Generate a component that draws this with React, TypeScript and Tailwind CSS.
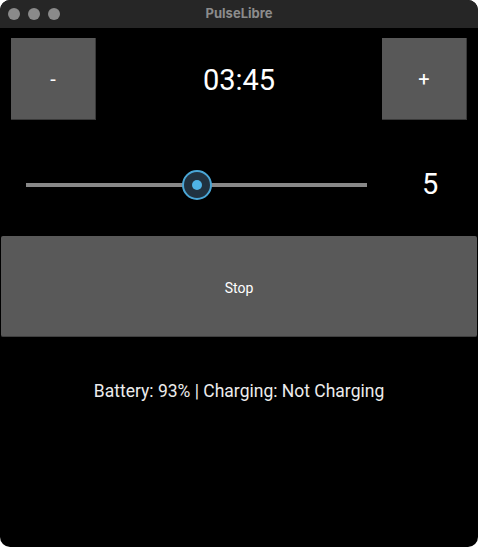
import React from 'react'

const Dot = () => <span className='w-[12px] h-[12px] rounded-full bg-[#8a8a8a]' />

export default function App() {
  return (
    <div className='w-[478px] h-[547px] bg-white' style={{ fontFamily: 'Roboto, sans-serif' }}>
      <div className='w-full h-full rounded-[10px] overflow-hidden bg-black flex flex-col'>
        {/* title bar */}
        <div className='h-[28px] bg-[#262626] relative flex items-center justify-center shrink-0'>
          <div className='absolute left-[8px] top-[8px] flex gap-[8px]'>
            <Dot />
            <Dot />
            <Dot />
          </div>
          <span className='text-[13px] font-bold text-[#8c8c8c]' style={{ fontFamily: 'Inter, sans-serif' }}>PulseLibre</span>
        </div>

        {/* timer row */}
        <div className='flex items-center justify-between px-[11px] pt-[10px]'>
          <button className='w-[85px] h-[82px] bg-[#585858] border-r border-b border-[#3a3a3a] text-white text-[20px]'>-</button>
          <span className='text-white text-[29px] pt-[4px]'>03:45</span>
          <button className='w-[85px] h-[82px] bg-[#585858] border-r border-b border-[#3a3a3a] text-white text-[20px]'>+</button>
        </div>

        {/* slider row */}
        <div className='flex items-center mt-[50px] h-[30px]'>
          <div className='ml-[26px] w-[341px] h-[4px] bg-[#888888] relative'>
            <div className='absolute left-[156px] top-[-13px] w-[30px] h-[30px] rounded-full bg-[#213240] border-[2px] border-[#4aa6d6] flex items-center justify-center'>
              <span className='w-[10px] h-[10px] rounded-full bg-[#4fb3e6]' />
            </div>
          </div>
          <span className='ml-[55px] text-white text-[29px]'>5</span>
        </div>

        {/* stop */}
        <button className='mx-[1px] mt-[36px] h-[101px] bg-[#595959] border-b border-[#3f3f3f] rounded-[2px] text-white text-[14px] pt-[4px]'>Stop</button>

        <div className='mt-[41px] text-center text-[#ececec] text-[17.5px]'>Battery: 93% | Charging: Not Charging</div>
      </div>
    </div>
  )
}
